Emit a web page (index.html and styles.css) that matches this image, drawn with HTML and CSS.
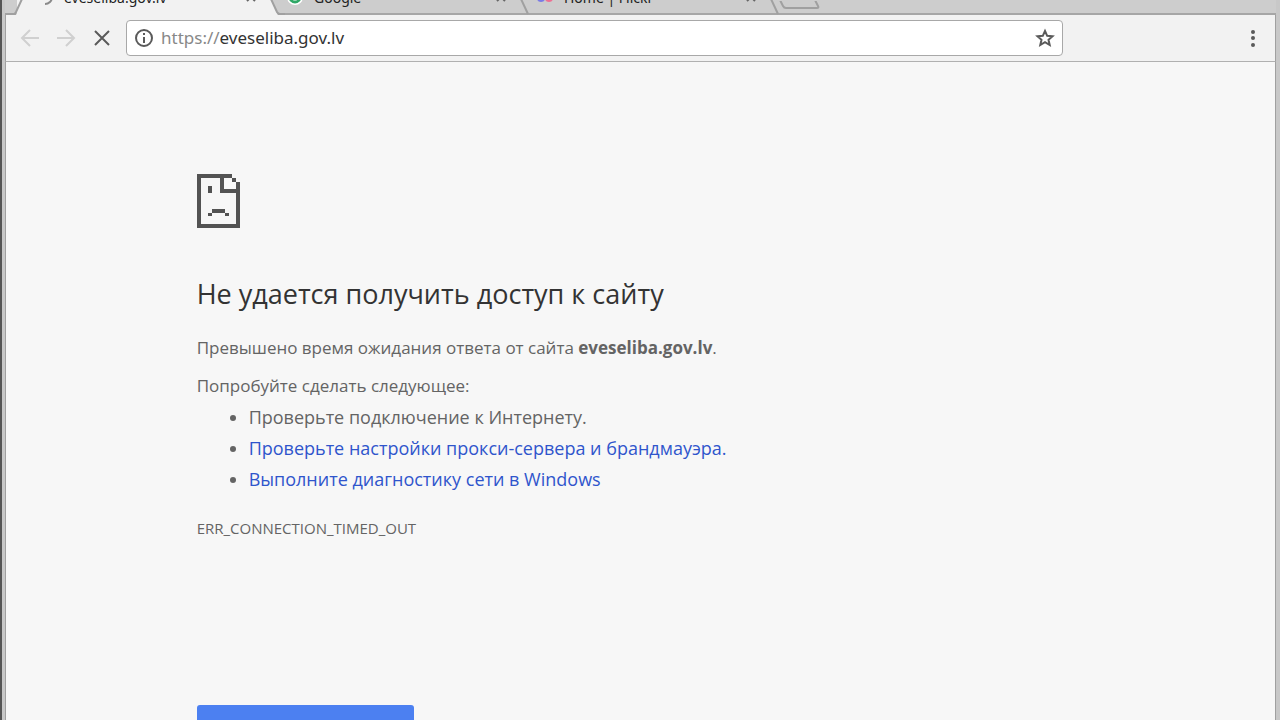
FILE: index.html
```html
<!DOCTYPE html>
<html lang="ru">
<head>
    <meta charset="UTF-8">
    <meta name="viewport" content="width=device-width, initial-scale=1.0">
    <title>eveseliba.gov.lv</title>
    <link rel="stylesheet" href="styles.css">
</head>
<body>
    <div class="window">
        <div class="tab-strip">
            <div class="tab active">
                <svg class="tab-edge left" width="18" height="15" viewBox="0 0 18 15"><path class="fill" d="M11 15 L17 0 H18 V15Z"/><path class="line" d="M0 14 H9 Q10 14 11 12 L17 -1"/></svg>
                <svg class="favicon" width="16" height="16" viewBox="0 0 16 16"><path d="M15 8 A7 7 0 0 1 8 15" fill="none" stroke="#8a8a8a" stroke-width="2"/></svg>
                <span class="tab-title">eveseliba.gov.lv</span>
                <button class="tab-close" aria-label="Закрыть"><svg width="10" height="10" viewBox="0 0 10 10"><path d="M1 1 L9 9 M9 1 L1 9"/></svg></button>
                <svg class="tab-edge right" width="20" height="15" viewBox="0 0 20 15"><path class="fill" d="M0 0 H6 L13 15 H0Z"/><path class="line" d="M6 -1 L12 12 Q13 14 15 14 H20"/></svg>
            </div>
            <div class="tab">
                <svg class="favicon" width="16" height="16" viewBox="0 0 16 16"><circle cx="8" cy="8" r="8" fill="#fff"/><path d="M13 8 A5 5 0 0 1 3 8" fill="none" stroke="#2fa866" stroke-width="3"/></svg>
                <span class="tab-title">Google</span>
                <button class="tab-close" aria-label="Закрыть"><svg width="10" height="10" viewBox="0 0 10 10"><path d="M1 1 L9 9 M9 1 L1 9"/></svg></button>
                <svg class="tab-edge right" width="20" height="15" viewBox="0 0 20 15"><path class="line" d="M6 -1 L13 14"/></svg>
            </div>
            <div class="tab">
                <svg class="favicon" width="16" height="16" viewBox="0 0 16 16"><circle cx="4" cy="9" r="4" fill="#7a7ae6"/><circle cx="12" cy="9" r="4" fill="#ee6f93"/></svg>
                <span class="tab-title">Home | Flickr</span>
                <button class="tab-close" aria-label="Закрыть"><svg width="10" height="10" viewBox="0 0 10 10"><path d="M1 1 L9 9 M9 1 L1 9"/></svg></button>
                <svg class="tab-edge right" width="20" height="15" viewBox="0 0 20 15"><path class="line" d="M6 -1 L13 14"/></svg>
            </div>
            <button class="new-tab" aria-label="Новая вкладка"><svg width="42" height="14" viewBox="0 0 42 14"><path d="M1 -1 L4 5 Q5 7 7 7 H38 Q40 7 39 5 L36 -1"/></svg></button>
        </div>

        <div class="toolbar">
            <button class="tool disabled" aria-label="Назад"><svg width="20" height="20" viewBox="0 0 20 20"><path d="M19 10 H2 M10 2 L2 10 L10 18"/></svg></button>
            <button class="tool disabled" aria-label="Вперед"><svg width="20" height="20" viewBox="0 0 20 20"><path d="M1 10 H18 M10 2 L18 10 L10 18"/></svg></button>
            <button class="tool" aria-label="Остановить"><svg width="20" height="20" viewBox="0 0 20 20"><path d="M3 3 L17 17 M17 3 L3 17"/></svg></button>
            <div class="address">
                <svg class="info" width="20" height="20" viewBox="0 0 20 20"><circle cx="10" cy="10" r="8"/><path d="M10 9 V15 M10 5 V7"/></svg>
                <label class="scheme" for="url">https://</label>
                <input class="url" id="url" type="text" value="eveseliba.gov.lv" spellcheck="false">
                <button aria-label="Добавить в закладки"><svg class="star" width="20" height="20" viewBox="0 0 20 20"><path d="M10 3 L12.200 7.800 L17.500 8.300 L13.500 11.800 L14.700 17 L10 14.200 L5.300 17 L6.500 11.800 L2.500 8.300 L7.800 7.800Z"/></svg></button>
            </div>
            <button class="menu" aria-label="Меню"><svg width="6" height="20" viewBox="0 0 6 20"><circle cx="3" cy="4" r="2"/><circle cx="3" cy="10" r="2"/><circle cx="3" cy="17" r="2"/></svg></button>
        </div>

        <main class="page">
            <div class="error">
                <svg class="sad-icon" width="43" height="54" viewBox="0 0 43 54" shape-rendering="crispEdges">
                    <path fill-rule="evenodd" d="M0 0H35V4H39V8H43V54H0Z M4 4V50H39V19H23V4Z M27 4V15H39V8H35V4Z"/>
                    <path d="M11 12H15V19H11Z M15 35H28V39H15Z M11 39H15V42H11Z M28 39H32V42H28Z"/>
                </svg>
                <h1>Не удается получить доступ к сайту</h1>
                <p>Превышено время ожидания ответа от сайта <strong>eveseliba.gov.lv</strong>.</p>
                <p class="try">Попробуйте сделать следующее:</p>
                <ul>
                    <li>Проверьте подключение к Интернету.</li>
                    <li><a href="#">Проверьте настройки прокси-сервера и брандмауэра.</a></li>
                    <li><a href="#">Выполните диагностику сети в Windows</a></li>
                </ul>
                <div class="error-code">ERR_CONNECTION_TIMED_OUT</div>
                <button class="reload" aria-label="Перезагрузить"></button>
            </div>
        </main>
    </div>
</body>
</html>
```
FILE: styles.css
```css
* {
    box-sizing: border-box;
    margin: 0;
    padding: 0;
}

body {
    font-family: "Open Sans", "Noto Sans", sans-serif;
    background: #c8c8c8;
    color: #646464;
    height: 100vh;
    overflow: hidden;
}

button {
    background: none;
    border: none;
    cursor: pointer;
}

svg {
    display: block;
    flex: none;
}

.window {
    display: flex;
    flex-direction: column;
    height: 100vh;
    border-left: 2px solid #555;
    padding: 0 4px 0 3px;
}

/* tabs */
.tab-strip {
    display: flex;
    align-items: flex-end;
    height: 15px;
    padding-left: 12px;
    overflow: hidden;
    background: #cdcdcd;
    box-shadow: inset 0 -2px #a6a6a6;
}

.tab {
    display: flex;
    flex: none;
    align-items: center;
    position: relative;
    width: 250px;
    height: 36px;
    padding: 0 11px 0 20px;
    font-family: "Noto Sans", sans-serif;
    font-size: 14px;
    color: #222;
}

.tab.active {
    background: #f2f2f2;
}

.tab-title {
    flex: 1;
    margin-left: 11px;
}

.tab-close path {
    stroke: #666;
    stroke-width: 2;
}

.tab-edge {
    position: absolute;
    bottom: 0;
}

.tab-edge.left {
    left: -12px;
}

.tab-edge.right {
    right: -18px;
}

.tab-edge .fill {
    fill: #f2f2f2;
}

.tab-edge .line,
.new-tab path {
    fill: none;
    stroke: #a0a0a0;
    stroke-width: 2;
}

.new-tab {
    height: 15px;
    margin-left: 12px;
}

/* toolbar */
.toolbar {
    display: flex;
    align-items: center;
    height: 47px;
    padding: 0 19px 0 6px;
    background: #f2f2f2;
    border-left: 1px solid #a0a0a0;
    border-right: 1px solid #a0a0a0;
    border-bottom: 1px solid #b0b0b0;
}

.tool {
    width: 36px;
    padding: 0 8px;
}

.tool path {
    fill: none;
    stroke: #5a5a5a;
    stroke-width: 2;
}

.tool.disabled path {
    stroke: #d0d0d0;
}

.address {
    display: flex;
    align-items: center;
    flex: 1;
    height: 36px;
    margin-left: 6px;
    margin-right: 187px;
    padding: 0 7px;
    background: #fff;
    border: 1px solid #a8a8a8;
    border-radius: 4px;
}

.info circle,
.info path,
.star path {
    fill: none;
    stroke: #5a5a5a;
    stroke-width: 2;
}

.scheme,
.url {
    font-family: "Noto Sans", sans-serif;
    font-size: 17px;
    line-height: 24px;
}

.scheme {
    margin-left: 7px;
    color: #888;
}

.url {
    flex: 1;
    min-width: 0;
    border: none;
    outline: none;
    background: none;
    color: #333;
}

.menu circle {
    fill: #5a5a5a;
}

/* error page */
.page {
    flex: 1;
    background: #f7f7f7;
    border-left: 1px solid #a0a0a0;
    border-right: 1px solid #a0a0a0;
    overflow: hidden;
}

.error {
    width: 75%;
    margin: 0 auto;
    padding-top: 112px;
    padding-left: 32px;
}

.sad-icon {
    fill: #535353;
}

h1 {
    margin-top: 46px;
    font-size: 27px;
    font-weight: 400;
    line-height: 40px;
    color: #333;
}

p {
    margin-top: 20px;
    font-size: 17px;
    line-height: 28px;
}

.try {
    margin-top: 10px;
}

ul {
    margin-top: 2px;
    padding-left: 52px;
    font-size: 18px;
    line-height: 31px;
}

a {
    color: #2f55cc;
    text-decoration: none;
}

.error-code {
    margin-top: 23px;
    font-size: 15px;
    line-height: 20px;
}

.reload {
    display: block;
    width: 217px;
    height: 60px;
    margin-top: 167px;
    background: #4c80f1;
    border-radius: 3px;
}
```
